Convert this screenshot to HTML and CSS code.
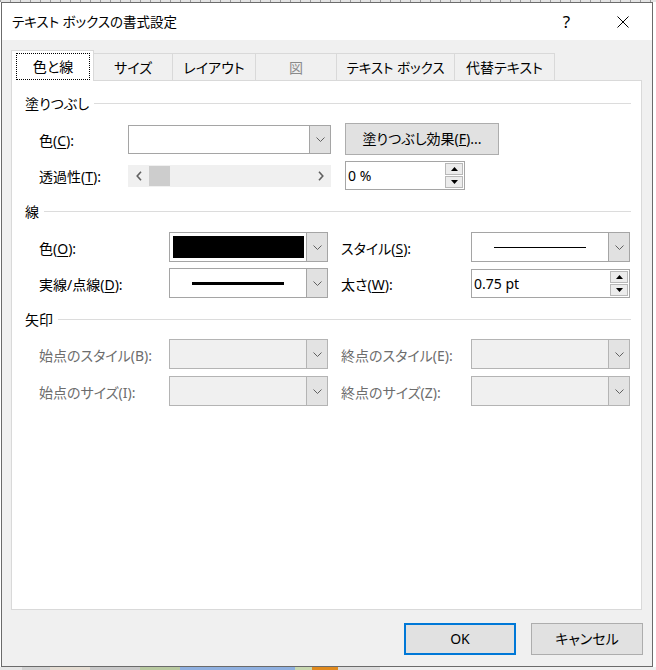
FILE: index.html
```html
<!DOCTYPE html>
<html lang="ja">
<head>
<meta charset="utf-8">
<title>テキスト ボックスの書式設定</title>
<link rel="stylesheet" href="styles.css">
</head>
<body>
<div class="desk-top"></div>
<div class="dialog">
  <div class="titlebar">
    <span class="title">テキスト ボックスの書式設定</span>
    <span class="tb-help">?</span>
    <span class="tb-close"><svg width="12" height="12" viewBox="0 0 12 12"><path d="M0.5 0.5 L11.5 11.5 M11.5 0.5 L0.5 11.5" stroke="#000" stroke-width="1" fill="none"/></svg></span>
  </div>
  <div class="client">
    <div class="tabs">
      <div class="tab active t1"><span class="focus">色と線</span></div>
      <div class="tab t2">サイズ</div>
      <div class="tab t3">レイアウト</div>
      <div class="tab t4 tab-disabled">図</div>
      <div class="tab t5">テキスト ボックス</div>
      <div class="tab t6">代替テキスト</div>
    </div>
    <div class="panel">
      <div class="sec-head h-fill">塗りつぶし</div>
      <div class="row r1">
        <span class="label lw-fill">色(<u>C</u>):</span>
        <div class="combo cw-fill">
          <div class="val"></div>
          <div class="dd"><svg width="9" height="5" viewBox="0 0 9 5"><path d="M0.5 0.5 L4.5 4.5 L8.5 0.5" stroke="#606060" fill="none"/></svg></div>
        </div>
        <button class="pbtn">塗りつぶし効果(<u>F</u>)...</button>
      </div>
      <div class="row r2">
        <span class="label lw-fill">透過性(<u>T</u>):</span>
        <div class="scroll">
          <div class="sarrow"><svg width="6" height="10" viewBox="0 0 6 10"><path d="M5 0.8 L1.2 5 L5 9.2" stroke="#606060" stroke-width="1.6" fill="none"/></svg></div>
          <div class="thumb"></div>
          <div class="strack"></div>
          <div class="sarrow"><svg width="6" height="10" viewBox="0 0 6 10"><path d="M1 0.8 L4.8 5 L1 9.2" stroke="#606060" stroke-width="1.6" fill="none"/></svg></div>
        </div>
        <div class="spin sw-fill">
          <div class="val">0 %</div>
          <div class="arrows">
            <div class="abtn"><svg width="7" height="4" viewBox="0 0 7 4"><path d="M0 4 L3.5 0 L7 4 Z" fill="#000"/></svg></div>
            <div class="abtn"><svg width="7" height="4" viewBox="0 0 7 4"><path d="M0 0 L3.5 4 L7 0 Z" fill="#000"/></svg></div>
          </div>
        </div>
      </div>

      <div class="sec-head h-line">線</div>
      <div class="row r3">
        <span class="label lw-line">色(<u>O</u>):</span>
        <div class="combo cw-line">
          <div class="val swatch-wrap"><div class="swatch"></div></div>
          <div class="dd"><svg width="9" height="5" viewBox="0 0 9 5"><path d="M0.5 0.5 L4.5 4.5 L8.5 0.5" stroke="#606060" fill="none"/></svg></div>
        </div>
        <span class="label lw-line rcol">スタイル(<u>S</u>):</span>
        <div class="combo cw-line">
          <div class="val line-wrap"><div class="thin-line"></div></div>
          <div class="dd"><svg width="9" height="5" viewBox="0 0 9 5"><path d="M0.5 0.5 L4.5 4.5 L8.5 0.5" stroke="#606060" fill="none"/></svg></div>
        </div>
      </div>
      <div class="row r4">
        <span class="label lw-line">実線/点線(<u>D</u>):</span>
        <div class="combo cw-line">
          <div class="val line-wrap"><div class="thick-line"></div></div>
          <div class="dd"><svg width="9" height="5" viewBox="0 0 9 5"><path d="M0.5 0.5 L4.5 4.5 L8.5 0.5" stroke="#606060" fill="none"/></svg></div>
        </div>
        <span class="label lw-line rcol">太さ(<u>W</u>):</span>
        <div class="spin sw-line">
          <div class="val">0.75 pt</div>
          <div class="arrows">
            <div class="abtn"><svg width="7" height="4" viewBox="0 0 7 4"><path d="M0 4 L3.5 0 L7 4 Z" fill="#000"/></svg></div>
            <div class="abtn"><svg width="7" height="4" viewBox="0 0 7 4"><path d="M0 0 L3.5 4 L7 0 Z" fill="#000"/></svg></div>
          </div>
        </div>
      </div>

      <div class="sec-head h-arrow">矢印</div>
      <div class="row r5">
        <span class="label lw-line dis">始点のスタイル(B):</span>
        <div class="combo cw-line disabled">
          <div class="val"></div>
          <div class="dd"><svg width="9" height="5" viewBox="0 0 9 5"><path d="M0.5 0.5 L4.5 4.5 L8.5 0.5" stroke="#606060" fill="none"/></svg></div>
        </div>
        <span class="label lw-line rcol dis">終点のスタイル(E):</span>
        <div class="combo cw-line disabled">
          <div class="val"></div>
          <div class="dd"><svg width="9" height="5" viewBox="0 0 9 5"><path d="M0.5 0.5 L4.5 4.5 L8.5 0.5" stroke="#606060" fill="none"/></svg></div>
        </div>
      </div>
      <div class="row r6">
        <span class="label lw-line dis">始点のサイズ(I):</span>
        <div class="combo cw-line disabled">
          <div class="val"></div>
          <div class="dd"><svg width="9" height="5" viewBox="0 0 9 5"><path d="M0.5 0.5 L4.5 4.5 L8.5 0.5" stroke="#606060" fill="none"/></svg></div>
        </div>
        <span class="label lw-line rcol dis">終点のサイズ(Z):</span>
        <div class="combo cw-line disabled">
          <div class="val"></div>
          <div class="dd"><svg width="9" height="5" viewBox="0 0 9 5"><path d="M0.5 0.5 L4.5 4.5 L8.5 0.5" stroke="#606060" fill="none"/></svg></div>
        </div>
      </div>
    </div>
    <div class="buttons">
      <button class="btn default">OK</button>
      <button class="btn">キャンセル</button>
    </div>
  </div>
</div>
<div class="desk-bottom">
  <span class="seg s1"></span><span class="seg s2"></span><span class="seg s3"></span><span class="seg s4"></span><span class="seg s5"></span><span class="seg s6"></span><span class="seg s7"></span><span class="seg s8"></span><span class="seg s9"></span><span class="seg s10"></span>
</div>
</body>
</html>
```

FILE: styles.css
```css
html, body {
  margin: 0;
  padding: 0;
}
body {
  width: 656px;
  height: 670px;
  overflow: hidden;
  background: #ffffff;
  font-family: "Noto Sans", "Noto Sans CJK JP", sans-serif;
  font-size: 14px;
  font-feature-settings: "palt";
  color: #000;
}
.desk-top {
  height: 2px;
  background: repeating-linear-gradient(90deg, #9a9a9a 0 1px, #e4e4e4 1px 10px);
}
.dialog {
  margin-left: 1px;
  width: 652px;
  height: 665px;
  box-sizing: border-box;
  border: 1px solid #6b6b6b;
  display: flex;
  flex-direction: column;
  background: #f0f0f0;
}
.titlebar {
  height: 37px;
  flex: none;
  background: #fff;
  display: flex;
  align-items: center;
}
.title {
  flex: 1;
  padding-left: 10px;
  font-size: 13.5px;
  line-height: 16px;
}
.tb-help {
  width: 15px;
  text-align: center;
  font-size: 17px;
  line-height: 18px;
  margin-right: 43px;
}
.tb-close {
  width: 12px;
  height: 12px;
  display: flex;
  margin-right: 23px;
}
.client {
  flex: 1;
  padding-top: 10px;
  display: flex;
  flex-direction: column;
}
.tabs {
  height: 30px;
  margin-left: 9px;
  display: flex;
  align-items: flex-end;
}
.tab {
  box-sizing: border-box;
  height: 27px;
  border: 1px solid #d9d9d9;
  border-bottom: none;
  background: #f0f0f0;
  margin-left: -1px;
  display: flex;
  align-items: center;
  justify-content: center;
  line-height: 16px;
  padding-top: 1px;
  white-space: nowrap;
}
.tab.t1 { margin-left: 0; width: 83px; }
.tab.t2 { width: 80px; }
.tab.t3 { width: 84px; }
.tab.t4 { width: 82px; }
.tab.t5 { width: 119px; font-size: 13.5px; }
.tab.t6 { width: 101px; }
.tab-disabled { color: #8a8a8a; }
.tab.active {
  height: 31px;
  margin-bottom: -1px;
  background: #fff;
  position: relative;
  z-index: 1;
  align-items: stretch;
  padding: 2px 3px 1px 4px;
}
.focus {
  flex: 1;
  border: 1px dotted #000;
  display: flex;
  align-items: center;
  justify-content: center;
}
.panel {
  box-sizing: border-box;
  height: 530px;
  margin: 0 10px 0 9px;
  border: 1px solid #d9d9d9;
  background: #fff;
  display: flex;
  flex-direction: column;
}
.sec-head {
  height: 16px;
  line-height: 16px;
  display: flex;
  align-items: center;
  padding-left: 13px;
  padding-right: 10px;
}
.sec-head::after {
  content: "";
  flex: 1;
  height: 1px;
  margin-left: 5px;
  margin-top: -1px;
  background: #dcdcdc;
}
.h-fill { margin-top: 15px; }
.h-line { margin-top: 14px; }
.h-arrow { margin-top: 14px; }
.row {
  display: flex;
  align-items: center;
  padding-left: 27px;
}
.r1 { height: 32px; margin-top: 11px; }
.r2 { height: 29px; margin-top: 6px; }
.r3 { height: 30px; margin-top: 12px; }
.r4 { height: 30px; margin-top: 6px; }
.r5 { height: 30px; margin-top: 11px; }
.r6 { height: 30px; margin-top: 7px; }
.label {
  line-height: 16px;
  padding-top: 3px;
  white-space: nowrap;
}
.label u { text-underline-offset: 2px; }
.lw-fill { width: 89px; }
.lw-line { width: 130px; }
.rcol { margin-left: 13px; }
.dis { color: #6d6d6d; }
.combo {
  box-sizing: border-box;
  height: 30px;
  border: 1px solid #a5a5a5;
  background: #fff;
  display: flex;
}
.cw-fill { width: 203px; height: 29px; }
.cw-line { width: 159px; }
.combo .val { flex: 1; }
.combo .dd {
  width: 20px;
  background: #e1e1e1;
  border-left: 1px solid #a5a5a5;
  display: flex;
  align-items: center;
  justify-content: center;
}
.combo.disabled {
  background: #f0f0f0;
  border-color: #b4b4b4;
}
.combo.disabled .dd {
  border-left-color: #b4b4b4;
  background: #e3e3e3;
}
.swatch-wrap {
  padding: 3px 2px 3px 3px;
  display: flex;
}
.swatch {
  flex: 1;
  background: #000;
}
.line-wrap {
  display: flex;
  align-items: center;
  justify-content: center;
}
.thin-line {
  width: 92px;
  height: 1px;
  background: #000;
}
.thick-line {
  width: 92px;
  height: 3px;
  background: #000;
}
.pbtn {
  box-sizing: border-box;
  width: 154px;
  height: 32px;
  margin-left: 14px;
  border: 1px solid #adadad;
  background: #e1e1e1;
  font: inherit;
  color: #000;
  padding: 0;
  line-height: 16px;
}
.scroll {
  width: 203px;
  height: 22px;
  background: #f0f0f0;
  display: flex;
  align-items: center;
}
.sarrow {
  width: 21px;
  height: 22px;
  display: flex;
  align-items: center;
  justify-content: center;
}
.thumb {
  width: 21px;
  height: 20px;
  background: #cdcdcd;
}
.strack { flex: 1; }
.spin {
  box-sizing: border-box;
  height: 29px;
  border: 1px solid #a5a5a5;
  background: #fff;
  display: flex;
}
.sw-fill { width: 120px; margin-left: 14px; }
.sw-line { width: 159px; height: 29px; }
.spin .val {
  flex: 1;
  padding-left: 2px;
  line-height: 16px;
  display: flex;
  align-items: center;
  padding-top: 1px;
  white-space: pre;
}
.spin .arrows {
  width: 18px;
  padding: 1px 1px 1px 0;
  display: flex;
  flex-direction: column;
  gap: 1px;
}
.abtn {
  flex: 1;
  box-sizing: border-box;
  border: 1px solid #b8b8b8;
  background: #ececec;
  display: flex;
  align-items: center;
  justify-content: center;
}
.buttons {
  margin-top: 13px;
  display: flex;
  justify-content: flex-end;
  gap: 15px;
  padding-right: 9px;
}
.btn {
  box-sizing: border-box;
  width: 112px;
  height: 32px;
  border: 1px solid #adadad;
  background: #e1e1e1;
  font: inherit;
  color: #000;
  padding: 0;
  line-height: 16px;
}
.btn.default {
  border: 2px solid #0078d7;
}
.desk-bottom {
  height: 3px;
  display: flex;
  background: #f0f0f0;
}
.seg { height: 3px; }
.s1 { width: 22px; background: #e6e6e6; }
.s2 { width: 28px; background: #d2d2d2; }
.s3 { width: 40px; background: #e4dcd2; }
.s4 { width: 50px; background: #c8c8c8; }
.s5 { width: 40px; background: #b8c9a0; }
.s6 { width: 115px; background: #8fb0e0; }
.s7 { width: 17px; background: #c8d8b0; }
.s8 { width: 26px; background: #e08a1e; }
.s9 { width: 42px; background: #dcdcdc; }
.s10 { width: 60px; background: #f0f0f0; }
```
